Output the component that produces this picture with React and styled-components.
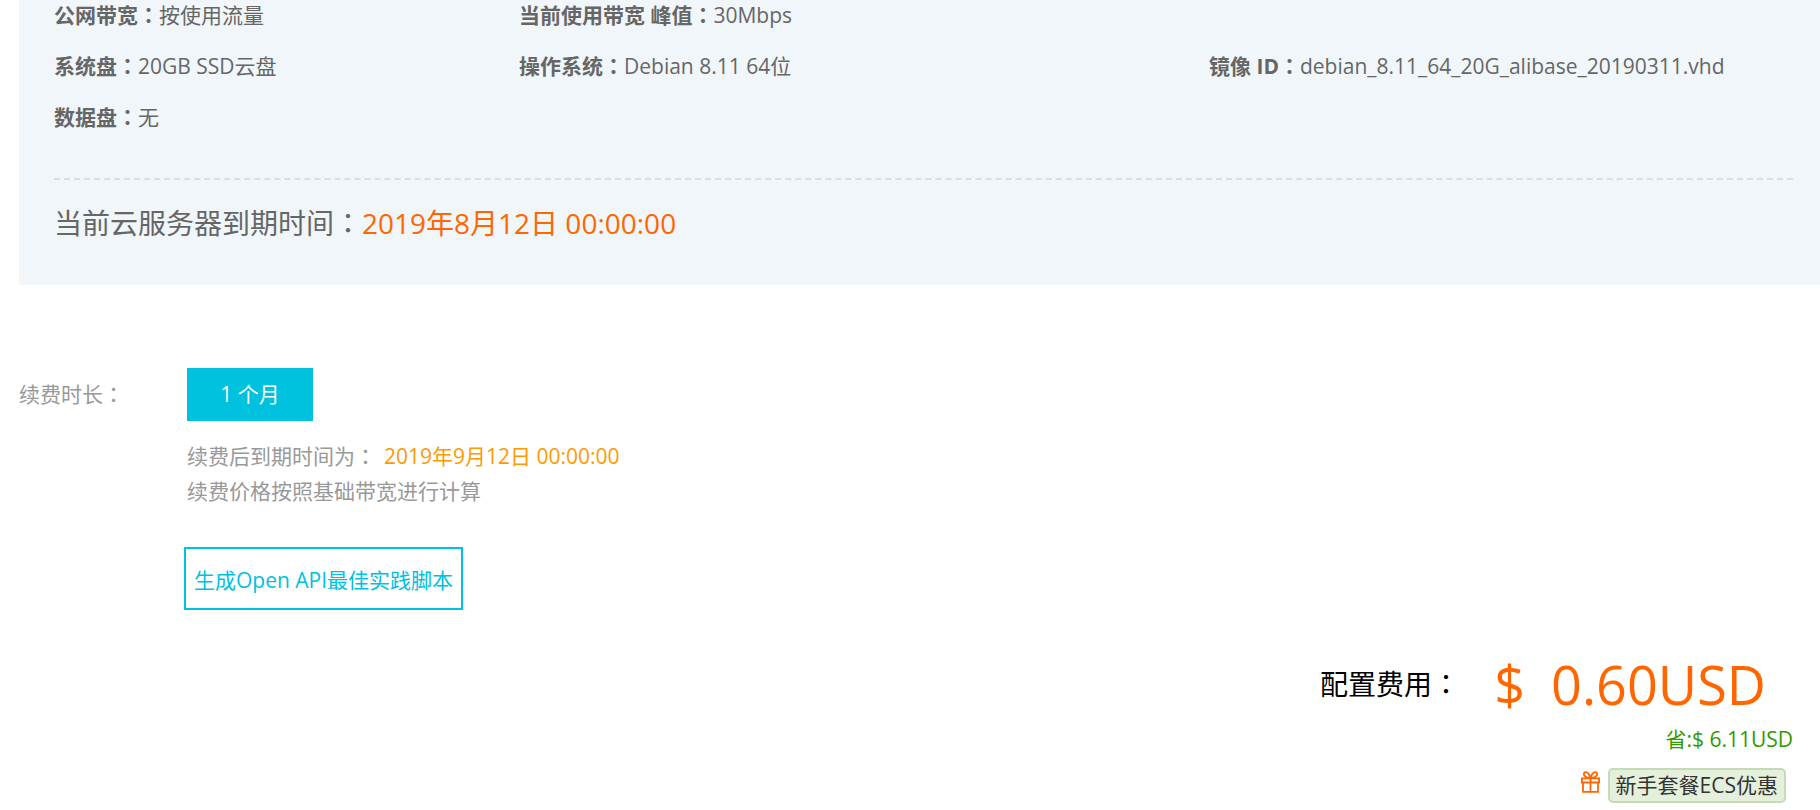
import React from "react";
import styled, { createGlobalStyle } from "styled-components";

const cyan = "#00c1de";
const orange = "#ff6600";

const GlobalStyle = createGlobalStyle`
  body {
    margin: 0;
    background: #fff;
    color: #666;
    font-family: "Open Sans", "Noto Sans CJK SC", sans-serif;
    font-size: 21px;
    line-height: 35px;
  }

  button {
    font: inherit;
    cursor: pointer;
  }
`;

const Page = styled.main`
  padding-left: 19px;
`;

const Panel = styled.section`
  padding: 0 27px 41px 35px;
  background: #f0f6f9;
`;

const Specs = styled.dl`
  display: grid;
  grid-template-columns: 465fr 690fr 584fr;
  row-gap: 21px;
  margin: 0;
  padding-bottom: 46px;
  border-bottom: 2px dashed #ddd;
  line-height: 30px;
`;

const Spec = styled.div`
  display: flex;
  grid-column: ${props => props.$column};
  white-space: nowrap;
`;

const SpecName = styled.dt`
  font-weight: 700;
`;

const SpecValue = styled.dd`
  margin: 0;
`;

// The JP face centres the full-width colon in its box
const ColonMark = styled.span`
  font-family: "Noto Sans CJK JP", sans-serif;
  line-height: 1;
`;

const Expiry = styled.p`
  margin: 0;
  padding-top: 22px;
  font-size: 28px;
  line-height: 42px;
`;

const ExpiryDate = styled.span`
  color: ${orange};
`;

const Renewal = styled.section`
  display: grid;
  grid-template-columns: 168px 1fr;
  margin-top: 83px;
  color: #999;
`;

const Label = styled.span`
  line-height: 53px;
`;

const Period = styled.button`
  width: 126px;
  height: 53px;
  padding: 0;
  border: 0;
  background: ${cyan};
  color: #fff;
`;

const Hints = styled.div`
  margin-top: 18px;
`;

const Hint = styled.p`
  margin: 0;
`;

const RenewedDate = styled.span`
  margin-left: 8px;
  color: #ff9900;
`;

const ScriptButton = styled.button`
  height: 63px;
  margin: 38px 0 0 -3px;
  padding: 4px 8px 0;
  border: 2px solid ${cyan};
  background: #fff;
  color: ${cyan};
`;

const Summary = styled.section`
  display: flex;
  flex-direction: column;
  align-items: flex-end;
  margin-top: 36px;
  padding-right: 27px;
`;

const Cost = styled.div`
  display: flex;
  align-items: center;
  margin-right: 27px;
  line-height: 76px;
`;

const CostLabel = styled.span`
  margin-right: 34px;
  color: #000;
  font-size: 28px;
`;

const Price = styled.span`
  display: flex;
  gap: 26px;
  color: ${orange};
  font-size: 54px;
`;

const Saving = styled.span`
  color: #339900;
`;

const Promo = styled.div`
  display: flex;
  gap: 8px;
  margin: 11px 7px 0 0;
`;

const Coupon = styled.span`
  padding: 0 6px;
  border: 2px solid #c5dbb7;
  border-radius: 5px;
  background: #e4efdc;
  color: #333;
  line-height: 31px;
`;

const GiftSvg = styled.svg`
  width: 19px;
  height: 22px;
  margin-top: 3px;
  fill: none;
  stroke: ${orange};
  stroke-width: 1.8;
`;

const Colon = () => <ColonMark lang="ja">：</ColonMark>;

const Gift = () => (
  <GiftSvg viewBox="0 0 19 22" aria-hidden="true">
    <path d="M.9 7.3h17.2v4.2H.9zM2 11.5v9.4h15v-9.4M9.5 7.3v13.6" />
    <path d="M9.2 7C5 6.600 2.2 4.800 3 2.300 4-.2 8.200 1 9.200 7zM9.800 7c4.200-.4 7-2.200 6.200-4.700C15-.2 10.800 1 9.800 7z" />
  </GiftSvg>
);

const specs = [
  { column: 1, name: "公网带宽", value: "按使用流量" },
  { column: 2, name: "当前使用带宽 峰值", value: "30Mbps" },
  { column: 1, name: "系统盘", value: "20GB SSD云盘" },
  { column: 2, name: "操作系统", value: "Debian 8.11 64位" },
  { column: 3, name: "镜像 ID", value: "debian_8.11_64_20G_alibase_20190311.vhd" },
  { column: 1, name: "数据盘", value: "无" }
];

const App = () => (
  <Page>
    <GlobalStyle />
    <Panel>
      <Specs>
        {specs.map(({ column, name, value }) => (
          <Spec key={name} $column={column}>
            <SpecName>
              {name}
              <Colon />
            </SpecName>
            <SpecValue>{value}</SpecValue>
          </Spec>
        ))}
      </Specs>
      <Expiry>
        当前云服务器到期时间
        <Colon />
        <ExpiryDate>2019年8月12日 00:00:00</ExpiryDate>
      </Expiry>
    </Panel>
    <Renewal>
      <Label id="period-label">
        续费时长
        <Colon />
      </Label>
      <div>
        <div role="group" aria-labelledby="period-label">
          <Period type="button" aria-pressed="true">
            1 个月
          </Period>
        </div>
        <Hints>
          <Hint>
            续费后到期时间为
            <Colon />
            <RenewedDate>2019年9月12日 00:00:00</RenewedDate>
          </Hint>
          <Hint>续费价格按照基础带宽进行计算</Hint>
        </Hints>
        <ScriptButton type="button">生成Open API最佳实践脚本</ScriptButton>
      </div>
    </Renewal>
    <Summary>
      <Cost>
        <CostLabel>
          配置费用
          <Colon />
        </CostLabel>
        <Price>
          <span>$</span>
          <span>0.60USD</span>
        </Price>
      </Cost>
      <Saving>省:$ 6.11USD</Saving>
      <Promo>
        <Gift />
        <Coupon>新手套餐ECS优惠</Coupon>
      </Promo>
    </Summary>
  </Page>
);

export default App;
